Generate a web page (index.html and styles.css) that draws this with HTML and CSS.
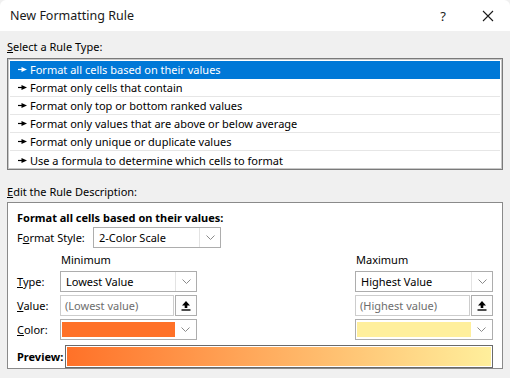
FILE: index.html
```html
<!DOCTYPE html>
<html>
<head>
<meta charset="utf-8">
<link rel="stylesheet" href="styles.css">
</head>
<body>
<div class="window">
  <div class="titlebar">
    <span class="title">New Formatting Rule</span>
    <span class="help">?</span>
    <svg class="close" width="12" height="12" viewBox="0 0 12 12"><path d="M1 1 L11 11 M11 1 L1 11" stroke="#1a1a1a" stroke-width="1.1" fill="none"/></svg>
  </div>
  <div class="content">
    <div class="section-label"><u>S</u>elect a Rule Type:</div>
    <div class="list">
      <div class="item selected"><svg class="arr" width="9" height="7" viewBox="0 0 9 7"><path d="M0 3.5 H4" stroke="currentColor" stroke-width="1.2"/><path d="M3.5 1 L9 3.5 L3.5 6 Z" fill="currentColor"/></svg>Format all cells based on their values</div>
      <div class="item"><svg class="arr" width="9" height="7" viewBox="0 0 9 7"><path d="M0 3.5 H4" stroke="currentColor" stroke-width="1.2"/><path d="M3.5 1 L9 3.5 L3.5 6 Z" fill="currentColor"/></svg>Format only cells that contain</div>
      <div class="item"><svg class="arr" width="9" height="7" viewBox="0 0 9 7"><path d="M0 3.5 H4" stroke="currentColor" stroke-width="1.2"/><path d="M3.5 1 L9 3.5 L3.5 6 Z" fill="currentColor"/></svg>Format only top or bottom ranked values</div>
      <div class="item"><svg class="arr" width="9" height="7" viewBox="0 0 9 7"><path d="M0 3.5 H4" stroke="currentColor" stroke-width="1.2"/><path d="M3.5 1 L9 3.5 L3.5 6 Z" fill="currentColor"/></svg>Format only values that are above or below average</div>
      <div class="item"><svg class="arr" width="9" height="7" viewBox="0 0 9 7"><path d="M0 3.5 H4" stroke="currentColor" stroke-width="1.2"/><path d="M3.5 1 L9 3.5 L3.5 6 Z" fill="currentColor"/></svg>Format only unique or duplicate values</div>
      <div class="item"><svg class="arr" width="9" height="7" viewBox="0 0 9 7"><path d="M0 3.5 H4" stroke="currentColor" stroke-width="1.2"/><path d="M3.5 1 L9 3.5 L3.5 6 Z" fill="currentColor"/></svg>Use a formula to determine which cells to format</div>
    </div>
    <div class="section-label second"><u>E</u>dit the Rule Description:</div>
    <div class="panel">
      <div class="panel-title">Format all cells based on their values:</div>
      <div class="style-row">
        <span class="style-label">F<u>o</u>rmat Style:</span>
        <div class="dropdown style-dd"><span class="dd-text">2-Color Scale</span><span class="chev"><svg width="9" height="5" viewBox="0 0 9 5"><path d="M0.5 0.5 L4.5 4.5 L8.5 0.5" stroke="#8a8a8a" fill="none"/></svg></span></div>
      </div>
      <div class="grid">
        <span></span><span class="col-head">Minimum</span><span></span><span class="col-head">Maximum</span>

        <span class="lbl"><u>T</u>ype:</span>
        <div class="dropdown"><span class="dd-text">Lowest Value</span><span class="chev"><svg width="9" height="5" viewBox="0 0 9 5"><path d="M0.5 0.5 L4.5 4.5 L8.5 0.5" stroke="#8a8a8a" fill="none"/></svg></span></div>
        <span></span>
        <div class="dropdown"><span class="dd-text">Highest Value</span><span class="chev"><svg width="9" height="5" viewBox="0 0 9 5"><path d="M0.5 0.5 L4.5 4.5 L8.5 0.5" stroke="#8a8a8a" fill="none"/></svg></span></div>

        <span class="lbl"><u>V</u>alue:</span>
        <div class="value-field"><span class="input">(Lowest value)</span><span class="upbtn"><svg width="10" height="11" viewBox="0 0 10 11"><path d="M5 1 L9 5.5 H6.3 V8 H3.7 V5.5 H1 Z" fill="#000"/><rect x="0.5" y="9.3" width="9" height="1.4" fill="#000"/></svg></span></div>
        <span></span>
        <div class="value-field"><span class="input">(Highest value)</span><span class="upbtn"><svg width="10" height="11" viewBox="0 0 10 11"><path d="M5 1 L9 5.5 H6.3 V8 H3.7 V5.5 H1 Z" fill="#000"/><rect x="0.5" y="9.3" width="9" height="1.4" fill="#000"/></svg></span></div>

        <span class="lbl"><u>C</u>olor:</span>
        <div class="dropdown color-dd"><span class="swatch min"></span><span class="chev"><svg width="9" height="5" viewBox="0 0 9 5"><path d="M0.5 0.5 L4.5 4.5 L8.5 0.5" stroke="#8a8a8a" fill="none"/></svg></span></div>
        <span></span>
        <div class="dropdown color-dd"><span class="swatch max"></span><span class="chev"><svg width="9" height="5" viewBox="0 0 9 5"><path d="M0.5 0.5 L4.5 4.5 L8.5 0.5" stroke="#8a8a8a" fill="none"/></svg></span></div>
      </div>
      <div class="preview-row">
        <span class="preview-label">Preview:</span>
        <div class="preview-bar"><div class="gradient"></div></div>
      </div>
    </div>
  </div>
</div>
</body>
</html>
```
FILE: styles.css
```css
* { box-sizing: border-box; }
html, body { margin: 0; padding: 0; }
body {
  width: 510px;
  height: 378px;
  overflow: hidden;
  background: #f0f0f0;
  font-family: "Noto Sans", "Open Sans", sans-serif;
  font-size: 11px;
  color: #000;
}
u { text-decoration: underline; text-underline-offset: 1px; }
.window { width: 510px; height: 378px; background: #f0f0f0; }
.titlebar {
  height: 31px;
  background: #fff;
  display: flex;
  align-items: center;
  padding-left: 10px;
  border-top-left-radius: 6px;
  border-top-right-radius: 6px;
}
.title { font-size: 12.5px; flex: 1; color: #1a1a1a; }
.help { font-size: 13px; margin-right: 36px; color: #1a1a1a; }
.close { margin-right: 16px; }
.content { padding: 0 7px; }
.section-label { height: 27px; padding-top: 9px; line-height: 14px; }
.section-label.second { height: 32px; padding-top: 15px; }
.list {
  height: 112px;
  border: 1px solid #7a7a7a;
  box-shadow: inset 0 0 0 1px #c8c8c8;
  background: #fff;
  padding: 2px 2px 0 2px;
}
.item {
  height: 18px;
  display: flex;
  align-items: center;
  padding-left: 8px;
  border-bottom: 1px solid #e6e6e6;
  white-space: nowrap;
}
.item:last-child { border-bottom: none; }
.item.selected { background: #0078d7; color: #fff; border-bottom-color: #0078d7; }
.arr { margin-right: 3px; }
.panel {
  height: 167px;
  border: 1px solid #8a8a8a;
  background: #fff;
  padding: 8px 9px 0 9px;
}
.panel-title { font-weight: bold; line-height: 14px; height: 16px; }
.style-row { display: flex; align-items: center; height: 21px; }
.style-label { width: 76px; }
.dropdown {
  height: 21px;
  border: 1px solid #adadad;
  background: #fff;
  display: flex;
  align-items: stretch;
}
.style-dd { width: 128px; }
.dd-text { flex: 1; padding-left: 5px; display: flex; align-items: center; white-space: nowrap; }
.chev {
  width: 21px;
  display: flex;
  align-items: center;
  justify-content: center;
  border-left: 1px solid #e3e3e3;
}
.grid {
  display: grid;
  grid-template-columns: 43px 137px 1fr 138px;
  grid-template-rows: 16px 21px 21px 21px;
  row-gap: 3px;
  align-items: center;
  margin-top: 4px;
}
.col-head { line-height: 14px; padding-left: 1px; }
.value-field { display: flex; height: 21px; }
.value-field .input {
  flex: 1;
  border: 1px solid #cdcdcd;
  color: #6d6d6d;
  padding-left: 4px;
  display: flex;
  align-items: center;
  white-space: nowrap;
}
.upbtn {
  width: 22px;
  border: 1px solid #adadad;
  margin-left: 1px;
  display: flex;
  align-items: center;
  justify-content: center;
  background: #fdfdfd;
}
.color-dd { padding: 1px 0 1px 1px; }
.swatch { flex: 1; margin: 1px 0; }
.swatch.min { background: #ff7128; }
.swatch.max { background: #ffef9c; }
.color-dd .chev { border-left: none; }
.preview-row { display: flex; align-items: center; margin-top: 5px; height: 23px; }
.preview-label { font-weight: bold; width: 48px; }
.preview-bar {
  flex: 1;
  height: 23px;
  border: 1px solid #6a6a6a;
  padding: 1px;
  background: #fff;
}
.gradient { height: 100%; background: linear-gradient(to right, #ff7128, #ffef9c); }
```
